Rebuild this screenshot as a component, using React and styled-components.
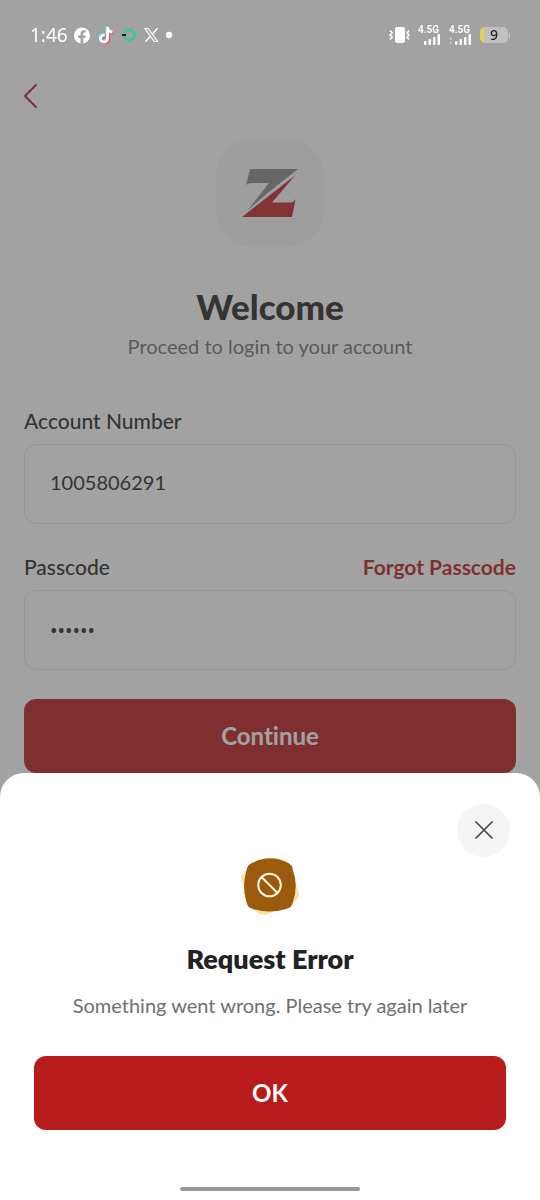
import React from "react";
import styled, { createGlobalStyle } from "styled-components";

const GlobalStyle = createGlobalStyle`
  * { box-sizing: border-box; }
  body {
    margin: 0;
    background: #ffffff;
    color: #222222;
    font-family: Lato, "Noto Sans", sans-serif;
    font-variant-ligatures: none;
  }
  button, input { font-family: inherit; font-variant-ligatures: none; }
  h1, h2, p { margin: 0; }
`;

const Page = styled.div`
  min-height: 100vh;
  display: flex;
  flex-direction: column;
`;

const StatusBar = styled.header`
  position: relative;
  z-index: 2;
  height: 70px;
  padding: 0 30px;
  display: flex;
  align-items: center;
  justify-content: space-between;
  color: #ffffff;
`;

const StatusGroup = styled.div`
  display: flex;
  align-items: center;
  gap: ${(p) => p.$gap}px;
`;

const Clock = styled.time`
  font-family: "Noto Sans", sans-serif;
  font-size: 19px;
  line-height: 24px;
`;

const Signal = styled.span`
  width: 23px;
  display: flex;
  flex-direction: column;
  font: 600 10px/8px Roboto, sans-serif;
`;

const BatteryGauge = styled.span`
  display: flex;
  align-items: center;
  gap: 1px;

  &::after {
    content: "";
    width: 1px;
    height: 5px;
    background: #c6c6c6;
  }
`;

const BatteryLevel = styled.span`
  width: 28px;
  height: 16px;
  border-radius: 5px;
  background: linear-gradient(to right, #ead04f 4px, #c0c0c0 4px);
  color: #222222;
  font: 500 14px/16px "Noto Sans", sans-serif;
  text-align: center;
`;

const NavBar = styled.nav`
  height: 52px;
  padding: 0 16px;
  display: flex;
  align-items: center;
`;

const BackButton = styled.button`
  width: 28px;
  height: 40px;
  padding: 0;
  border: 0;
  background: none;
  display: grid;
  place-items: center;
`;

const Main = styled.main`
  padding: 17px 24px 24px;
  display: flex;
  flex-direction: column;
`;

const LogoTile = styled.div`
  width: 108px;
  height: 108px;
  border-radius: 36px;
  background: #f7f7f7;
  align-self: center;
  display: grid;
  place-items: center;
`;

const Title = styled.h1`
  margin-top: 37px;
  font-size: 35px;
  line-height: 44px;
  font-weight: 900;
  text-align: center;
`;

const Subtitle = styled.p`
  margin-top: 4px;
  font-size: 20px;
  line-height: 28px;
  color: #6f6f6f;
  text-align: center;
`;

const Form = styled.form`
  margin-top: 47px;
  display: flex;
  flex-direction: column;
  gap: 29px;
`;

const Field = styled.div`
  display: flex;
  flex-direction: column;
  gap: 9px;
`;

const FieldHeader = styled.div`
  display: flex;
  justify-content: space-between;
  font-size: 21px;
  line-height: 28px;
`;

const Label = styled.label`
  font-weight: 500;
`;

const ForgotLink = styled.a`
  color: #b71b1b;
  font-weight: 700;
  text-decoration: none;
`;

const Input = styled.input`
  width: 100%;
  height: 80px;
  padding: 0 25px 4px;
  border: 1px solid #e4e4e4;
  border-radius: 12px;
  background: transparent;
  color: #222222;
  font-size: 20px;
  outline: none;

  &[type="password"] {
    padding-bottom: 0;
    font-family: "Noto Sans", sans-serif;
  }
`;

const PrimaryButton = styled.button`
  width: 100%;
  height: 74px;
  border: 0;
  border-radius: 12px;
  background: #b71b1b;
  color: #ffffff;
  font-size: 24px;
  line-height: 28px;
  font-weight: 700;
`;

const Scrim = styled.div`
  position: fixed;
  inset: 0;
  z-index: 1;
  background: rgba(69, 69, 69, 0.5);
  display: flex;
  flex-direction: column;
  justify-content: flex-end;
`;

const Sheet = styled.section`
  padding: 31px 30px 9px;
  border-radius: 24px 24px 0 0;
  background: #ffffff;
  display: flex;
  flex-direction: column;
  align-items: center;
`;

const CloseButton = styled.button`
  width: 53px;
  height: 53px;
  padding: 0;
  border: 0;
  border-radius: 50%;
  background: #f5f5f4;
  align-self: flex-end;
  display: grid;
  place-items: center;
`;

const SheetTitle = styled.h2`
  margin-top: 26px;
  font-size: 27px;
  line-height: 32px;
  font-weight: 800;
`;

const SheetText = styled.p`
  margin-top: 16px;
  font-size: 20px;
  line-height: 28px;
  color: #6f6f6f;
  text-align: center;
`;

const SheetActions = styled.div`
  width: 100%;
  padding: 37px 4px 57px;
`;

const HomeIndicator = styled.div`
  width: 180px;
  height: 4px;
  border-radius: 2px;
  background: #989898;
`;

const FacebookIcon = () => (
  <svg width="17" height="17" viewBox="0 0 17 17" aria-hidden="true">
    <circle cx="8" cy="8.5" r="8" fill="#fff" />
    <path d="M6.500 16.500v-5.400H4.300V8.400h2.200V6.900c0-2.500 1.300-3.700 3.500-3.700l1.700.1v2.300h-1.200c-1 0-1.300.5-1.300 1.300v1.500h2.500l-.4 2.700H9.200v5.400z" fill="#a2a2a2" />
  </svg>
);

const NOTE = "M9.2 1h2.900c.2 2 1.400 3.500 3.400 3.700v2.900c-1.300 0-2.400-.4-3.400-1v5.700c0 3.200-2.200 5.200-5 5.200-2.900 0-5-2.100-5-4.900 0-3 2.500-5.200 5.700-4.900v3c-1.500-.4-2.800.5-2.800 1.900 0 1.200.9 2 2.100 2 1.300 0 2.100-.9 2.100-2.300z";

const TikTokIcon = () => (
  <svg width="18" height="20" viewBox="1 0 18 20" aria-hidden="true">
    <path d={NOTE} fill="#45e0dc" />
    <path d={NOTE} fill="#ee3b62" transform="translate(2 2)" />
    <path d={NOTE} fill="#fff" transform="translate(1 1)" />
  </svg>
);

const RingIcon = () => (
  <svg width="16" height="16" viewBox="0 0 16 16" fill="none" aria-hidden="true">
    <path d="M3.600 6.200A5.200 5.200 0 1 1 3.600 9.800" stroke="#3fc79a" strokeWidth="3" />
    <path d="M1 8h4" stroke="#14202a" strokeWidth="2" />
  </svg>
);

const XIcon = () => (
  <svg width="16" height="16" viewBox="0 0 16 16" fill="none" stroke="#fff" aria-hidden="true">
    <path d="M2 1.500h3.200l9.300 13h-3.200z" strokeWidth="1.200" />
    <path d="M14.500 1.200 9.300 7.200M7.500 9.200l-5.200 5.600" strokeWidth="1.400" />
  </svg>
);

const DotIcon = () => (
  <svg width="8" height="8" viewBox="0 0 8 8" aria-hidden="true">
    <circle cx="4" cy="4" r="3.200" fill="#fff" />
  </svg>
);

const VibrateIcon = () => (
  <svg width="22" height="18" viewBox="0 0 22 18" fill="none" stroke="#fff" strokeWidth="1.600" aria-hidden="true">
    <rect x="7" y="1" width="10" height="16" rx="2" fill="#fff" stroke="none" />
    <path d="M2 4.500l2.200 2.200L2 9l2.200 2.300L2 13.500M21 4.500l-2 2.200L21 9l-2 2.300 2 2.200" />
  </svg>
);

const SignalBars = ({ faded }) => (
  <svg width="23" height="11" viewBox="0 0 23 11" fill="#fff" aria-hidden="true">
    {faded && <path d="M0 5.500 1.700 3l1.700 2.500zM0 8h3.400L1.700 10.500z" fillOpacity=".5" />}
    <rect x="6" y="7" width="2.500" height="4" rx="1" />
    <rect x="10.500" y="5" width="2.500" height="6" rx="1" />
    <rect x="15" y="3" width="2.500" height="8" rx="1" />
    <rect x="19.500" y="0" width="2.500" height="11" rx="1" />
  </svg>
);

const ChevronIcon = () => (
  <svg width="16" height="26" viewBox="0 0 16 26" fill="none" aria-hidden="true">
    <path d="M14 2 3 13l11 11" stroke="#b71b1b" strokeWidth="2" strokeLinecap="round" strokeLinejoin="round" />
  </svg>
);

const LogoMark = () => (
  <svg width="56" height="50" viewBox="0 0 56 50" role="img" aria-label="Z">
    <path d="M8 1h48L25 25.500 5.500 42.500 27 15H12.500C8.500 15 6.500 15 4 17z" fill="#878785" />
    <path d="M53 7.500 0 49h50l3.700-18c-2 3-3.500 3.500-7 3.500H30z" fill="#bf2022" />
  </svg>
);

const CloseIcon = () => (
  <svg width="20" height="20" viewBox="0 0 20 20" aria-hidden="true">
    <path d="M2 1l16 16M18 1 2 17" stroke="#484848" strokeWidth="1.700" strokeLinecap="round" />
  </svg>
);

const ErrorBadge = () => (
  <svg width="60" height="60" viewBox="0 0 60 60" fill="none" aria-hidden="true">
    <path d="M34 1c5 0 11 1 15 5l10 30c0 5-3 7-6 10L28 57c-5 2-10 0-14-4L1 23c-1-4 3-7 6-11z" fill="#fbe3a6" />
    <path d="M13 5.500q17-8.500 34 0c4 1.500 5.500 4 6 8q5.500 15 0 31c-1 5-3 6.500-7 7.500q-16.500 5-33 0c-4-1-5.500-3-6.500-7q-5-15.500 0-31.500c.5-4 2.500-6.500 6.500-8z" fill="#9b5a0c" />
    <circle cx="29.500" cy="28" r="11.300" stroke="#fff8e6" strokeWidth="2" />
    <path d="m21.500 20 16 16" stroke="#fff8e6" strokeWidth="2" />
  </svg>
);

export default function App() {
  return (
    <>
      <GlobalStyle />
      <Page>
        <StatusBar>
          <StatusGroup $gap={6}>
            <Clock>1:46</Clock>
            <FacebookIcon />
            <TikTokIcon />
            <RingIcon />
            <XIcon />
            <DotIcon />
          </StatusGroup>
          <StatusGroup $gap={8}>
            <VibrateIcon />
            <Signal>4.5G<SignalBars /></Signal>
            <Signal>4.5G<SignalBars faded /></Signal>
            <BatteryGauge><BatteryLevel>9</BatteryLevel></BatteryGauge>
          </StatusGroup>
        </StatusBar>
        <NavBar>
          <BackButton type="button" aria-label="Back"><ChevronIcon /></BackButton>
        </NavBar>
        <Main>
          <LogoTile><LogoMark /></LogoTile>
          <Title>Welcome</Title>
          <Subtitle>Proceed to login to your account</Subtitle>
          <Form onSubmit={(e) => e.preventDefault()}>
            <Field>
              <FieldHeader>
                <Label htmlFor="account">Account Number</Label>
              </FieldHeader>
              <Input id="account" inputMode="numeric" defaultValue="1005806291" />
            </Field>
            <Field>
              <FieldHeader>
                <Label htmlFor="passcode">Passcode</Label>
                <ForgotLink href="#forgot">Forgot Passcode</ForgotLink>
              </FieldHeader>
              <Input id="passcode" type="password" defaultValue="123456" />
            </Field>
            <PrimaryButton type="submit">Continue</PrimaryButton>
          </Form>
        </Main>
      </Page>
      <Scrim>
        <Sheet role="dialog" aria-modal="true" aria-labelledby="sheet-title">
          <CloseButton type="button" aria-label="Close"><CloseIcon /></CloseButton>
          <ErrorBadge />
          <SheetTitle id="sheet-title">Request Error</SheetTitle>
          <SheetText>Something went wrong. Please try again later</SheetText>
          <SheetActions>
            <PrimaryButton type="button">OK</PrimaryButton>
          </SheetActions>
          <HomeIndicator />
        </Sheet>
      </Scrim>
    </>
  );
}
